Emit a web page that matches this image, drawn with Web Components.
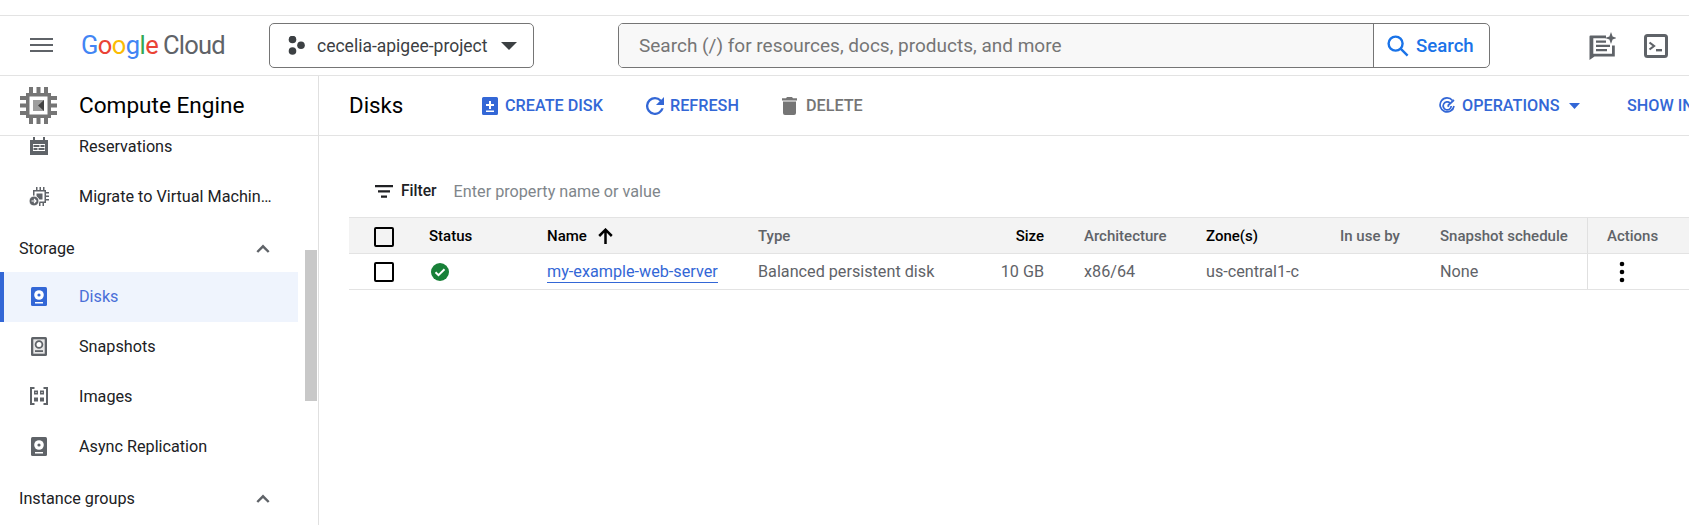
<!DOCTYPE html>
<html><head><meta charset="utf-8"><title>Disks</title>
<style>
html,body{margin:0;padding:0;height:525px;overflow:hidden;background:#fff;font-family:Roboto,"Liberation Sans",sans-serif;}
</style></head><body>
<gce-topbar></gce-topbar>
<gce-shell>
  <gce-nav slot="nav"></gce-nav>
  <gce-toolbar></gce-toolbar>
  <gce-filter></gce-filter>
  <gce-table></gce-table>
</gce-shell>
<script>
const def=(name,html)=>customElements.define(name,class extends HTMLElement{constructor(){super();this.attachShadow({mode:'open'}).innerHTML=html;}});

def('gce-topbar',`<style>
:host{display:block;box-sizing:border-box;height:76px;padding-top:15px;background:#fff}
.bar{box-sizing:border-box;height:61px;border-top:1.5px solid #e3e3e3;border-bottom:1.5px solid #e3e3e3;display:flex;align-items:center}
.burger{margin-left:30px;width:23px;height:15px;display:flex;flex-direction:column;justify-content:space-between;margin-top:-1px}
.burger i{display:block;height:2.4px;background:#5f6368}
.logo{margin-left:28px;font-size:25.5px;letter-spacing:-.55px;width:188px;white-space:nowrap;line-height:30px;margin-top:-2px}
.logo b{font-weight:400}
.logo .c{letter-spacing:-.8px;margin-left:-1px}
.proj{box-sizing:border-box;width:265px;height:45px;border:1px solid #757575;border-radius:5px;display:flex;align-items:center;padding:0 16px 0 18px;color:#3c4043;font-size:17.5px}
.proj svg{margin-right:9px;flex:none}
.proj .caret{margin:0 0 0 auto}
.search{box-sizing:border-box;margin-left:84px;width:872px;height:45px;border:1px solid #757575;border-radius:5px;display:flex;align-items:stretch;overflow:hidden}
.q{width:755px;background:#f8f8f8;color:#757575;font-size:19px;display:flex;align-items:center;padding-left:20px;box-sizing:border-box;border-right:1px solid #757575}
.btn{display:flex;align-items:center;color:#1a73e8;font-size:18.6px;font-weight:500;padding-left:13px;gap:7px}
.right{margin-left:98px;display:flex;align-items:center;gap:28px}
</style><div class="bar">
<div class="burger"><i></i><i></i><i></i></div>
<div class="logo"><b style="color:#4285f4">G</b><b style="color:#ea4335">o</b><b style="color:#fbbc04">o</b><b style="color:#4285f4">g</b><b style="color:#34a853">l</b><b style="color:#ea4335">e</b> <b class="c" style="color:#5f6368">Cloud</b></div>
<div class="proj"><svg width="20" height="20" viewBox="0 0 20 20"><g fill="#3c4043"><circle cx="4.500" cy="3.500" r="3.800"/><circle cx="4.500" cy="15" r="3.800"/><circle cx="13" cy="9.200" r="3.800"/></g></svg><span>cecelia-apigee-project</span><svg class="caret" width="16" height="8" viewBox="0 0 16 8"><path d="M0 0h16L8 8z" fill="#3c4043"/></svg></div>
<div class="search"><div class="q">Search (/) for resources, docs, products, and more</div>
<div class="btn"><svg width="22" height="22" viewBox="0 0 22 22" fill="none" stroke="#1a73e8" stroke-width="2.400"><circle cx="8.600" cy="8.600" r="7"/><path d="M13.600 13.600l7 7"/></svg><span>Search</span></div></div>
<div class="right">
<svg width="28" height="28" viewBox="0 0 28 28"><path d="M2.500 3.500H18v2.800H5.300v15.400H24v-8.200h2.800V24.500H6.500L1.500 28V4.500a1 1 0 0 1 1-1z" fill="#5f6368"/><path d="M8 8.500h10v2.300H8zM8 12.800h14v2.300H8zM8 17h11v2.300H8z" fill="#5f6368"/><path d="M23 0l1.600 4.400L29 6l-4.400 1.600L23 12l-1.600-4.400L17 6l4.400-1.600z" fill="#5f6368"/></svg>
<svg width="24" height="24" viewBox="0 0 24 24"><rect x="1.500" y="1.500" width="21" height="21" rx="2" fill="none" stroke="#5f6368" stroke-width="3"/><path d="M5.500 8.500l4.500 3.500-4.500 3.500" fill="none" stroke="#5f6368" stroke-width="2.200"/><path d="M12 15h6v2.400h-6z" fill="#5f6368"/></svg>
</div></div>`);

def('gce-shell',`<style>
:host{display:flex;height:449px;overflow:hidden}
.nav{flex:none;width:319px;box-sizing:border-box;border-right:1.5px solid #e0e0e0}
.main{flex:1;min-width:0;overflow:hidden}
</style><div class="nav"><slot name="nav"></slot></div><div class="main"><slot></slot></div>`);

const row=(icon,label,active)=>`<div class="row${active?' active':''}"><span class="i">${icon}</span><span>${label}</span></div>`;
const disk=c=>`<svg width="16" height="19" viewBox="0 0 16 19"><rect width="16" height="19" rx="1.500" fill="${c}"/><circle cx="8" cy="8" r="4.800" fill="#fff"/><circle cx="8" cy="8" r="1.600" fill="${c}"/><rect x="4" y="15" width="8" height="1.500" fill="#fff"/></svg>`;
const chev=`<svg width="14" height="9" viewBox="0 0 14 9"><path d="M1.300 8L7 2.300 12.700 8" fill="none" stroke="#5f6368" stroke-width="2.400"/></svg>`;
def('gce-nav',`<style>
:host{display:block;position:relative;height:449px;overflow:hidden;color:#202124;font-size:16.2px}
.head{box-sizing:border-box;height:60px;display:flex;align-items:center;border-bottom:1.5px solid #e3e3e3;font-size:22.6px;color:#000;position:relative;z-index:1;background:#fff}
.head svg{margin-left:20px;margin-right:22px;flex:none}
.list{margin-top:-15px}
.row{height:50px;display:flex;align-items:center;width:298px;box-sizing:border-box;position:relative;white-space:nowrap}
.sec ~ .row{padding-bottom:2px}
.i{width:79px;flex:none;display:flex;justify-content:center;padding-right:1px;box-sizing:border-box}
.active{background:#eff4fd;color:#4a6fd8;box-shadow:inset 4px 0 0 #3367d6}
.sec{height:51px;display:flex;align-items:center;justify-content:space-between;width:298px;box-sizing:border-box;padding:4px 28px 0 19px}
.sec.b{height:52px;padding-top:1px}
.thumb{position:absolute;left:305px;top:174px;width:12px;height:151px;background:#c8c8c8}
</style>
<div class="head"><svg width="37" height="37" viewBox="0 0 37 37"><g fill="#757575"><rect x="9" y="0" width="4" height="6"/><rect x="16.500" y="0" width="4" height="6"/><rect x="24" y="0" width="4" height="6"/><rect x="9" y="31" width="4" height="6"/><rect x="16.500" y="31" width="4" height="6"/><rect x="24" y="31" width="4" height="6"/><rect x="0" y="9" width="6" height="4"/><rect x="0" y="16.500" width="6" height="4"/><rect x="0" y="24" width="6" height="4"/><rect x="31" y="9" width="6" height="4"/><rect x="31" y="16.500" width="6" height="4"/><rect x="31" y="24" width="6" height="4"/><rect x="6" y="6" width="25" height="25"/></g><rect x="9.500" y="9.500" width="18" height="18" fill="#fff"/><rect x="13" y="13" width="11" height="11" fill="#9e9e9e"/><path d="M24 13v11l-6-5.500z" fill="#424242"/></svg><span>Compute Engine</span></div>
<div class="list">
${row(`<svg width="18" height="18" viewBox="0 0 18 18"><path d="M0 3h3V0h2v3h8V0h2v3h3v15H0z" fill="#5f6368"/><path d="M3 7h12v7H3z" fill="#fff"/><path d="M3.500 8h6v2h-6zM10.500 8h4v2h-4zM3.500 11h4v2h-4zM8.500 11h6v2h-6z" fill="#5f6368"/></svg>`,'Reservations')}
${row(`<svg width="20" height="19" viewBox="0 0 20 19"><g fill="#5f6368"><path d="M7 0h1.500v3H7zM10.500 0H12v3h-1.500zM14 0h1.500v3H14zM17 5h3v1.500h-3zM17 8.500h3V10h-3zM17 12h3v1.500h-3zM10 16h1.500v3H10zM13.500 16H15v3h-1.500z"/><path fill-rule="evenodd" d="M4 3h13v13H4zM5.500 4.500v10h10v-10z"/><rect x="7.500" y="6.500" width="6" height="6"/></g><circle cx="5" cy="14" r="5" fill="#5f6368" stroke="#fff" stroke-width="1"/><path d="M2.500 14h4M5 12l2 2-2 2" fill="none" stroke="#fff" stroke-width="1.100"/></svg>`,'Migrate to Virtual Machin…')}
<div class="sec"><span>Storage</span>${chev}</div>
${row(disk('#3367d6'),'Disks',1)}
${row(`<svg width="16" height="19" viewBox="0 0 16 19"><rect width="16" height="19" rx="1.500" fill="#5f6368"/><rect x="2.300" y="2.300" width="11.400" height="14.400" fill="#e8e8e8"/><circle cx="8" cy="7.500" r="3.400" fill="#fff" stroke="#5f6368" stroke-width="1.800"/><rect x="4" y="13.200" width="8" height="1.800" fill="#5f6368"/></svg>`,'Snapshots')}
${row(`<svg width="18" height="18" viewBox="0 0 18 18"><path d="M4.500 1H1v16h3.500" fill="none" stroke="#5f6368" stroke-width="2"/><path d="M13.500 1H17v16h-3.500" fill="none" stroke="#5f6368" stroke-width="2"/><path d="M4 3.500h4v4H4zM10 3.500h4v4h-4zM4 10.500h4v4H4zM10 10.500h4v4h-4z" fill="#5f6368"/><path d="M5.500 5h1v1h-1zM11.500 5h1v1h-1z" fill="#fff"/></svg>`,'Images')}
${row(disk('#5f6368'),'Async Replication')}
<div class="sec b"><span>Instance groups</span>${chev}</div>
</div>
<div class="thumb"></div>`);

def('gce-toolbar',`<style>
:host{display:block;box-sizing:border-box;height:60px;border-bottom:1.5px solid #e3e3e3;color:#3367d6;font-size:16.2px;font-weight:500;white-space:nowrap;overflow:hidden}
.w{display:flex;align-items:center;height:100%;padding-left:30px}
h1{margin:0 0 2px;font-size:22.3px;font-weight:400;color:#000;width:133px;flex:none}
.b{display:flex;align-items:center;flex:none}
svg{flex:none}
.gray{color:#757575}
</style><div class="w"><h1>Disks</h1>
<div class="b" style="gap:7px;width:164px"><svg width="16" height="18" viewBox="0 0 16 18"><path fill-rule="evenodd" d="M1.500 0h13A1.500 1.500 0 0 1 16 1.500v15a1.500 1.500 0 0 1-1.500 1.500h-13A1.500 1.500 0 0 1 0 16.500v-15A1.500 1.500 0 0 1 1.500 0zM7 4v3H4v2h3v3h2V9h3V7H9V4zM4 13.500V15h8v-1.500z" fill="#3367d6"/></svg><span>CREATE DISK</span></div>
<div class="b" style="gap:6px;width:136px"><svg width="18" height="18" viewBox="0 0 18 18"><path d="M15.300 2.700A8.900 8.900 0 0 0 9 0a9 9 0 1 0 8.700 11.300h-2.400A6.700 6.700 0 1 1 9 2.300c1.900 0 3.500.8 4.700 2L10 8h8V0z" fill="#3367d6"/></svg><span>REFRESH</span></div>
<div class="b gray" style="gap:9px;width:657px"><svg width="15" height="18" viewBox="0 0 15 18"><path d="M5 0h5l1 1.200h4V3.400H0V1.200h4zM1 4.500h13V16a2 2 0 0 1-2 2H3a2 2 0 0 1-2-2z" fill="#757575"/></svg><span>DELETE</span></div>
<div class="b" style="gap:7px;width:188px"><svg width="16" height="17" viewBox="0 0 16 17" fill="none" stroke="#3367d6" stroke-width="1.700"><path d="M13.500 3.500A7 7 0 1 0 15 9"/><path d="M11 6a4 4 0 1 0 1.200 3"/><path d="M9 8.500L15 3M8.500 9.500l1.500-1"/></svg><span>OPERATIONS</span><svg width="11" height="6" viewBox="0 0 11 6" style="margin-left:3px"><path d="M0 0h11L5.500 6z" fill="#3367d6"/></svg></div>
<div class="b">SHOW INFO PANEL</div></div>`);

def('gce-filter',`<style>
:host{display:flex;align-items:center;height:81px;box-sizing:border-box;padding-left:56px;padding-top:29px;color:#000}
b{font-weight:500;font-size:15.6px;margin-left:8px;margin-right:17px;color:#202124}
span{color:#80868b;font-size:16.200px}
</style><svg width="18" height="13" viewBox="0 0 18 13"><path d="M0 0h18v2.200H0zM3 5.300h12v2.200H3zM6 10.600h6v2.200H6z" fill="#202124"/></svg><b>Filter</b><span>Enter property name or value</span>`);

const box=`<span class="cb"></span>`;
def('gce-table',`<style>
:host{display:block;margin-left:30px;font-size:16.200px;color:#5f6368;white-space:nowrap}
.r{display:grid;grid-template-columns:80px 118px 211px 240px 86px 122px 134px 100px 147px 1fr;height:36px;box-sizing:border-box;border-bottom:1.500px solid #e3e3e3;align-items:center}
.h{height:37px;background:#f3f3f3;font-weight:500;font-size:15px;border-top:1.500px solid #e3e3e3}
.h .cb{margin-top:3px}
.k{color:#000}
.cb{display:block;box-sizing:border-box;width:20px;height:20px;border:2px solid #000;border-radius:2px;margin-left:25px}
.sz{text-align:right;padding-right:40px}
.act{align-self:stretch;border-left:1.500px solid #e0e0e0;display:flex;align-items:center;padding-left:19px}
.nm{display:flex;align-items:center;gap:11px}
a{color:#3367d6;text-decoration:none;border-bottom:1px solid #3367d6;padding-bottom:1px}
.st{display:flex;padding-left:2px}
.dots{padding-left:31px}
</style>
<div class="r h"><div>${box}</div><div class="k">Status</div><div class="k nm">Name<svg width="15" height="16" viewBox="0 0 15 16"><path d="M7.500 16V2M1.200 8l6.300-6.300L13.800 8" fill="none" stroke="#000" stroke-width="2.500"/></svg></div><div>Type</div><div class="k sz">Size</div><div>Architecture</div><div class="k">Zone(s)</div><div>In use by</div><div>Snapshot schedule</div><div class="act">Actions</div></div>
<div class="r"><div>${box}</div><div class="st"><svg width="18" height="18" viewBox="0 0 18 18"><circle cx="9" cy="9" r="9" fill="#188038"/><path d="M4.500 9.200l3 3 6-6" fill="none" stroke="#fff" stroke-width="2"/></svg></div><div><a>my-example-web-server</a></div><div>Balanced persistent disk</div><div class="sz">10 GB</div><div>x86/64</div><div>us-central1-c</div><div></div><div>None</div><div class="act dots"><svg width="6" height="22" viewBox="0 0 6 22"><circle cx="3" cy="3" r="2.300" fill="#000"/><circle cx="3" cy="11" r="2.300" fill="#000"/><circle cx="3" cy="19" r="2.300" fill="#000"/></svg></div></div>`);
</script>
</body></html>
